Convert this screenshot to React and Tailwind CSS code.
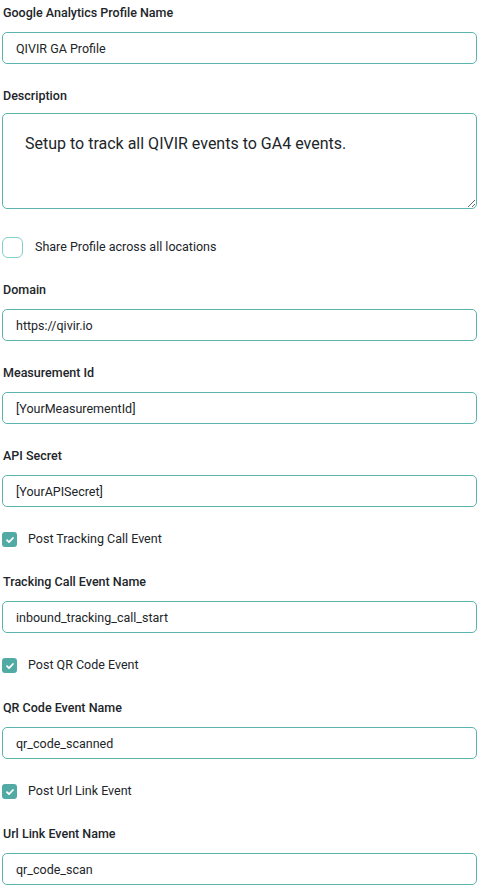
import React, { useState } from "react";

function Field({ label, value, onChange }) {
    return (
        <div className="flex flex-col">
            <label className="h-5 leading-5 text-[12.5px] font-medium text-[#212529] pl-px">{label}</label>
            <input
                type="text"
                value={value}
                onChange={e => onChange(e.target.value)}
                className="mt-[9px] h-8 w-full rounded-[5px] border border-[#5cb3ad] bg-white px-[13px] text-[12.5px] text-[#212529] outline-none"
            />
        </div>
    )
}

function Check({ label, checked, onChange }) {
    return (
        <label className="flex h-[21px] items-center gap-[11px] text-[12.5px] text-[#212529]">
            <span
                onClick={() => onChange(!checked)}
                className="flex h-[15px] w-[15px] items-center justify-center rounded-[3px] bg-[#52aaa5]"
            >
                {checked && (
                    <svg width="10" height="10" viewBox="0 0 10 10" fill="none">
                        <path d="M2 5.2l2 2L8 3" stroke="white" strokeWidth="1.8" strokeLinecap="round" strokeLinejoin="round" />
                    </svg>
                )}
            </span>
            {label}
        </label>
    )
}

export default function App() {
    const [name, setName] = useState('QIVIR GA Profile')
    const [description, setDescription] = useState('Setup to track all QIVIR events to GA4 events.')
    const [share, setShare] = useState(false)
    const [domain, setDomain] = useState('https://qivir.io')
    const [measurementId, setMeasurementId] = useState('[YourMeasurementId]')
    const [secret, setSecret] = useState('[YourAPISecret]')
    const [postCall, setPostCall] = useState(true)
    const [callEvent, setCallEvent] = useState('inbound_tracking_call_start')
    const [postQr, setPostQr] = useState(true)
    const [qrEvent, setQrEvent] = useState('qr_code_scanned')
    const [postUrl, setPostUrl] = useState(true)
    const [urlEvent, setUrlEvent] = useState('qr_code_scan')

    return (
        <form className="flex w-[481px] flex-col gap-[22px] bg-white pl-[2px] pr-[4px] pt-[3px] pb-[6px] font-['Roboto',sans-serif]">
            <Field label="Google Analytics Profile Name" value={name} onChange={setName} />

            <div className="flex flex-col">
                <label className="h-5 leading-5 text-[12.5px] font-medium text-[#212529] pl-px">Description</label>
                <textarea
                    value={description}
                    onChange={e => setDescription(e.target.value)}
                    rows={3}
                    className="mt-[7px] h-[96px] w-full rounded-[5px] border border-[#5cb3ad] bg-white px-[22px] py-[18px] text-[16px] leading-6 text-[#212529] outline-none"
                />
            </div>

            <label className="mt-[6px] flex h-[21px] items-center gap-[12px] text-[12.5px] text-[#212529]">
                <input
                    type="checkbox"
                    checked={share}
                    onChange={e => setShare(e.target.checked)}
                    className="h-[21px] w-[21px] appearance-none rounded-[6px] border border-[#7fd1ca] bg-white"
                />
                Share Profile across all locations
            </label>

            <Field label="Domain" value={domain} onChange={setDomain} />
            <Field label="Measurement Id" value={measurementId} onChange={setMeasurementId} />
            <Field label="API Secret" value={secret} onChange={setSecret} />

            <Check label="Post Tracking Call Event" checked={postCall} onChange={setPostCall} />
            <Field label="Tracking Call Event Name" value={callEvent} onChange={setCallEvent} />

            <Check label="Post QR Code Event" checked={postQr} onChange={setPostQr} />
            <Field label="QR Code Event Name" value={qrEvent} onChange={setQrEvent} />

            <Check label="Post Url Link Event" checked={postUrl} onChange={setPostUrl} />
            <Field label="Url Link Event Name" value={urlEvent} onChange={setUrlEvent} />
        </form>
    )
}
